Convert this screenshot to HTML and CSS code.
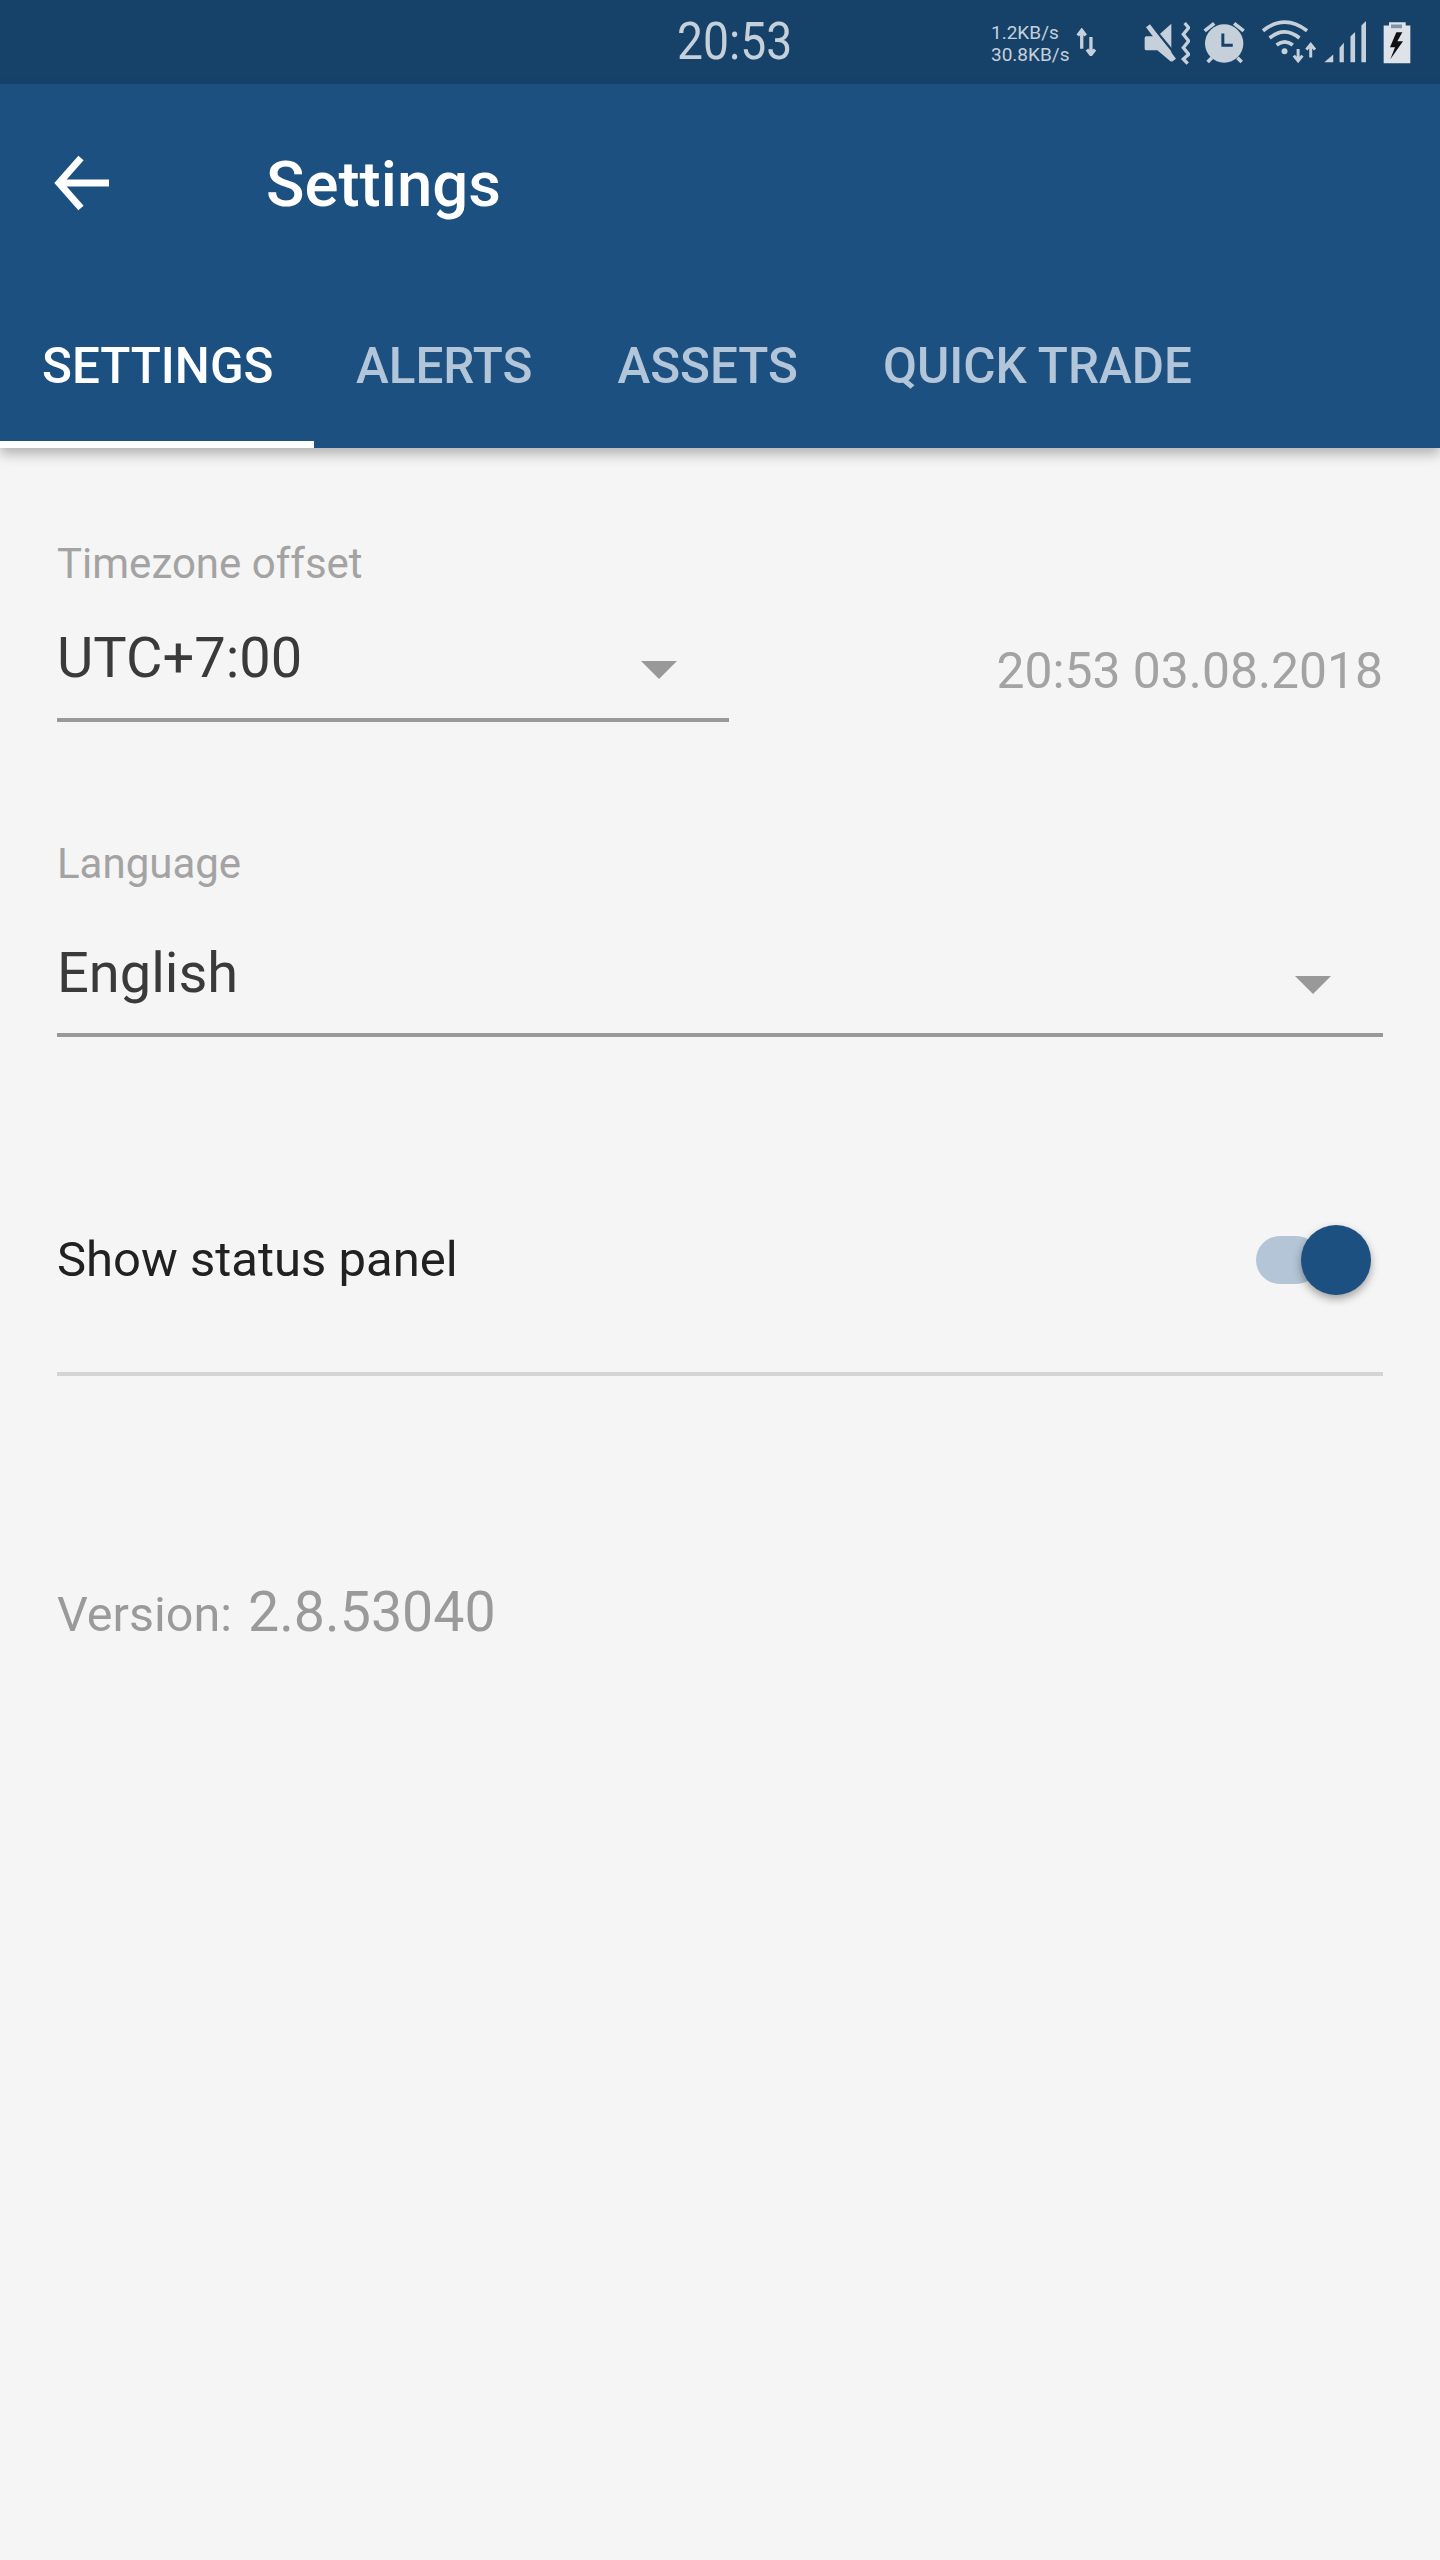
FILE: index.html
```html
<!DOCTYPE html>
<html lang="en">
<head>
  <meta charset="UTF-8">
  <meta name="viewport" content="width=device-width, initial-scale=1.0">
  <title>Settings</title>
  <link rel="stylesheet" href="styles.css">
</head>
<body>
  <div class="status-bar">
    <div class="clock">20:53</div>
    <div class="net-speed">
      <div>1.2KB/s</div>
      <div>30.8KB/s</div>
    </div>
    <svg class="icon icon-updown" viewBox="345 85 60 85">
      <path d="M362 148V100M350 108L362 92L374 108" fill="none" stroke="#c5d0da" stroke-width="10"/>
      <path d="M390 112V158M378 150L390 166L402 150" fill="none" stroke="#c5d0da" stroke-width="10"/>
    </svg>
    <svg class="icon icon-mute" viewBox="550 62 138 132">
      <path d="M557 108H590L632 70V185L590 150H557a5 5 0 0 1-5-5V113a5 5 0 0 1 5-5z" fill="#c5d0da"/>
      <path d="M548 62L650 186" stroke="#16426a" stroke-width="7" transform="translate(8 -7)"/>
      <path d="M562 76L640 180" stroke="#c5d0da" stroke-width="15"/>
      <path d="M672 68L684 82L668 102L684 122L668 142L684 162L668 176L681 190" fill="none" stroke="#c5d0da" stroke-width="10"/>
    </svg>
    <svg class="icon icon-alarm" viewBox="728 62 130 130">
      <circle cx="792" cy="130" r="58" fill="#c5d0da"/>
      <path d="M733 92L762 69M822 69L851 92M742 186L755 173M845 186L832 173" stroke="#c5d0da" stroke-width="11"/>
      <path d="M788 100V135H818" fill="none" stroke="#16426a" stroke-width="9"/>
    </svg>
    <svg class="icon icon-wifi" viewBox="902 58 172 132">
      <path d="M908 93Q973 41 1041 93" fill="none" stroke="#c5d0da" stroke-width="11"/>
      <path d="M928 115Q973 78 1018 115" fill="none" stroke="#c5d0da" stroke-width="11"/>
      <path d="M949 136Q973 117 998 136" fill="none" stroke="#c5d0da" stroke-width="11"/>
      <circle cx="973" cy="155" r="9" fill="#c5d0da"/>
      <path d="M1014 148V178M1001 168L1014 184L1027 168" fill="none" stroke="#c5d0da" stroke-width="9"/>
      <path d="M1052 174V142M1039 150L1052 134L1065 150" fill="none" stroke="#c5d0da" stroke-width="9"/>
    </svg>
    <svg class="icon icon-signal" viewBox="1092 60 130 128">
      <path d="M1093 187L1120 163V187z" fill="#c5d0da"/>
      <path d="M1139 187V143L1152 128V187z" fill="#c5d0da"/>
      <path d="M1172 187V109L1186 95V187z" fill="#c5d0da"/>
      <path d="M1205 187V76L1219 62V187z" fill="#c5d0da"/>
    </svg>
    <svg class="icon icon-battery" viewBox="1268 62 84 128">
      <path d="M1270 75H1286V65H1336V75H1350V188H1270z" fill="#dde3e8"/>
      <path d="M1292 72H1325V83H1292z" fill="#7d94ab"/>
      <path d="M1308 95L1289 140H1304L1290 176L1328 122H1311L1326 95z" fill="#111"/>
    </svg>
  </div>

  <div class="app-header">
    <div class="toolbar">
      <svg class="back-arrow" viewBox="0 0 56 56">
        <path d="M56 28H6M28 3L6 28L28 53" fill="none" stroke="#fff" stroke-width="7"/>
      </svg>
      <div class="toolbar-title">Settings</div>
    </div>
    <div class="tabs">
      <div class="tab active">SETTINGS</div>
      <div class="tab">ALERTS</div>
      <div class="tab">ASSETS</div>
      <div class="tab">QUICK TRADE</div>
    </div>
  </div>

  <div class="content">
    <div class="field-label">Timezone offset</div>
    <div class="timezone-row">
      <div class="select select-short">
        <span>UTC+7:00</span>
        <span class="caret"></span>
      </div>
      <div class="local-time">20:53 03.08.2018</div>
    </div>

    <div class="field-label label-language">Language</div>
    <div class="select select-language">
      <span>English</span>
      <span class="caret"></span>
    </div>

    <div class="switch-row">
      <span>Show status panel</span>
      <div class="switch">
        <div class="switch-thumb"></div>
      </div>
    </div>

    <div class="version">Version: <span class="version-number">2.8.53040</span></div>
  </div>
</body>
</html>
```

FILE: styles.css
```css
* {
  box-sizing: border-box;
}
body {
  margin: 0;
  min-height: 2560px;
  background-color: #f5f5f5;
  font-family: Roboto, "Liberation Sans", sans-serif;
}
.status-bar {
  display: flex;
  align-items: flex-start;
  height: 84px;
  padding-left: 677px;
  background-color: #16426a;
  color: #c5d0da;
}
.clock {
  width: 112px;
  font-size: 52px;
  line-height: 84px;
  transform: scaleX(0.89);
  transform-origin: left center;
}
.net-speed {
  margin: 22px 0 0 202px;
  font-size: 19px;
  line-height: 22px;
  width: 85px;
}
.icon {
  display: block;
}
.icon-updown {
  width: 20px;
  height: 28px;
  margin-top: 28px;
}
.icon-mute {
  width: 46px;
  height: 44px;
  margin: 21px 0 0 48px;
}
.icon-alarm {
  width: 43px;
  height: 43px;
  margin: 21px 0 0 13px;
}
.icon-wifi {
  width: 57px;
  height: 44px;
  margin: 19px 0 0 15px;
}
.icon-signal {
  width: 43px;
  height: 43px;
  margin: 20px 0 0 6px;
}
.icon-battery {
  width: 28px;
  height: 43px;
  margin: 21px 0 0 16px;
}
.app-header {
  height: 364px;
  background-color: #1b5080;
  box-shadow: 0 6px 12px rgba(0, 0, 0, 0.28);
}
.toolbar {
  display: flex;
  align-items: center;
  height: 200px;
  padding-left: 53px;
}
.back-arrow {
  width: 56px;
  height: 56px;
  margin-bottom: 2px;
}
.toolbar-title {
  margin-left: 157px;
  color: #ffffff;
  font-size: 63.5px;
  font-weight: 500;
}
.tabs {
  display: flex;
  height: 164px;
}
.tab {
  padding: 0 43px 0 42px;
  color: #b3c5d8;
  font-size: 49.4px;
  font-weight: 500;
  line-height: 164px;
}
.tab.active {
  width: 314px;
  color: #ffffff;
  border-bottom: 7px solid #ffffff;
}
.content {
  padding: 91px 57px 0;
}
.field-label {
  color: #a3a3a3;
  font-size: 42px;
  line-height: 49px;
}
.label-language {
  margin-top: 117px;
}
.timezone-row {
  display: flex;
  align-items: flex-start;
  justify-content: space-between;
  margin-top: 38px;
}
.select {
  display: flex;
  align-items: flex-start;
  justify-content: space-between;
  height: 96px;
  padding-right: 52px;
  color: #3a3a3a;
  font-size: 56px;
  line-height: 64px;
  border-bottom: 4px solid #999999;
}
.select-short {
  width: 672px;
}
.select-language {
  margin-top: 53px;
}
.caret {
  width: 0;
  height: 0;
  margin-top: 35px;
  border-left: 18px solid transparent;
  border-right: 18px solid transparent;
  border-top: 18px solid #999999;
}
.local-time {
  margin-top: 13px;
  color: #a3a3a3;
  font-size: 49.8px;
  line-height: 64px;
}
.switch-row {
  display: flex;
  align-items: center;
  justify-content: space-between;
  height: 339px;
  padding-top: 110px;
  color: #212121;
  font-size: 49px;
  border-bottom: 4px solid #d4d4d4;
}
.switch {
  position: relative;
  width: 64px;
  height: 48px;
  margin-right: 63px;
  border-radius: 24px;
  background-color: #b3c5d6;
}
.switch-thumb {
  position: absolute;
  top: -11px;
  left: 45px;
  width: 70px;
  height: 70px;
  border-radius: 50%;
  background-color: #1b5080;
  box-shadow: 0 4px 8px rgba(0, 0, 0, 0.35);
}
.version {
  margin-top: 204px;
  color: #9a9a9a;
  font-size: 48.5px;
}
.version-number {
  margin-left: 4px;
  font-size: 55.5px;
}
```
